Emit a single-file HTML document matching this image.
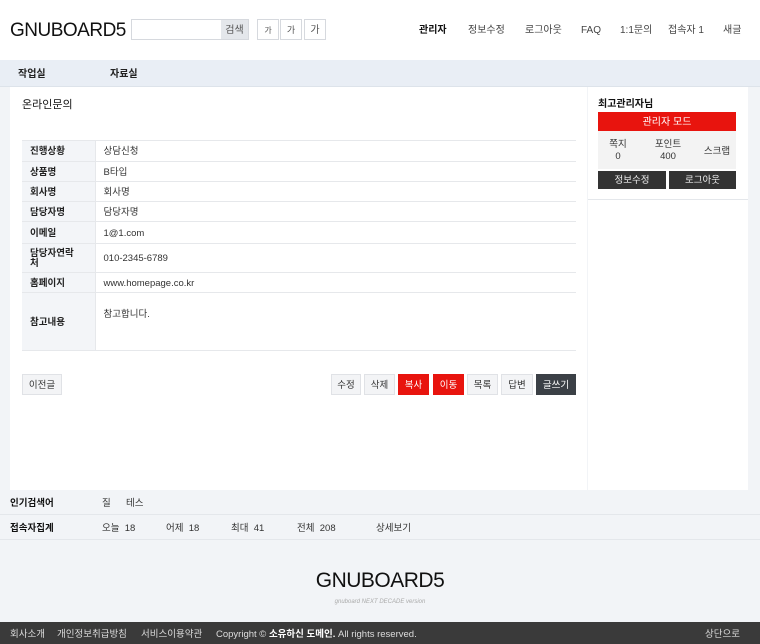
<!DOCTYPE html>
<html><head><meta charset="utf-8"><style>
*{margin:0;padding:0;box-sizing:border-box}
body{width:760px;height:644px;overflow:hidden;background:#f2f4f7;font-family:"Liberation Sans","Noto Sans CJK KR",sans-serif;font-size:10px;color:#333;position:relative;line-height:12px}
.a{position:absolute}
.hd{left:0;top:0;width:760px;height:60px;background:#fff}
.logo{left:10px;top:21px;font-size:19px;line-height:20px;color:#111;letter-spacing:-0.5px}
.sch{left:131px;top:19px;width:118px;height:21px;border:1px solid #d6d9de;background:#fff}
.sch b{position:absolute;right:0;top:0;width:27px;height:19px;background:#e4e7eb;font-weight:normal;font-size:10px;line-height:21px;text-align:center;color:#555}
.fs{top:19px;width:22px;height:21px;border:1px solid #d6d9de;background:#fff;text-align:center;line-height:21px;color:#555}
.tm{top:25px;font-size:10px;line-height:12px;color:#444}
.nav{left:0;top:60px;width:760px;height:27px;background:#e9eef5;border-bottom:1px solid #dde3ea}
.nav span{position:absolute;top:9px;line-height:12px;font-weight:bold;font-size:10px;color:#222}
.ct{left:10px;top:87px;width:577px;height:403px;background:#fff}
.sb{left:588px;top:87px;width:160px;height:403px;background:#fff}
table{position:absolute;left:22px;top:140px;width:554px;border-collapse:collapse;border-top:1px solid #e6e8eb}
td{border-bottom:1px solid #e6e8eb;padding-left:8px;padding-top:2px;font-size:9.5px;color:#333;line-height:12px}
td.l{width:73px;background:#f3f5f8;font-weight:bold;color:#222;border-right:1px solid #e6e8eb}
.bt{top:374px;height:21px;line-height:21px;text-align:center;font-size:9.5px;background:#f3f4f6;border:1px solid #e0e2e6;color:#333}
.r{background:#e8140e;color:#fff;border-color:#e8140e}
.k{background:#3b4046;color:#fff;border-color:#3b4046}
.row{left:0;width:760px;height:25px;border-bottom:1px solid #e4e7eb;background:#f2f4f7}
.row span{position:absolute;top:8px;line-height:12px;font-size:9.5px}
.ft{left:0;top:622px;width:760px;height:22px;background:#3a3a3a;color:#ddd}
.ft span{position:absolute;top:7px;line-height:12px;font-size:9.5px}
</style></head><body>
<div class="a hd"></div>
<div class="a logo">GNUBOARD5</div>
<div class="a sch"><b>검색</b></div>
<div class="a fs" style="left:257px;font-size:8px">가</div>
<div class="a fs" style="left:280px;font-size:9px">가</div>
<div class="a fs" style="left:304px;font-size:10px">가</div>
<div class="a tm" style="left:419px;font-weight:bold;color:#111">관리자</div>
<div class="a tm" style="left:468px">정보수정</div>
<div class="a tm" style="left:525px">로그아웃</div>
<div class="a tm" style="left:581px">FAQ</div>
<div class="a tm" style="left:620px">1:1문의</div>
<div class="a tm" style="left:668px">접속자 1</div>
<div class="a tm" style="left:723px">새글</div>
<div class="a nav"><span style="left:18px">작업실</span><span style="left:110px">자료실</span></div>
<div class="a ct"></div>
<div class="a sb"><div style="position:absolute;left:0;top:112px;width:160px;border-top:1px solid #e4e7eb"></div></div>
<div class="a" style="left:22px;top:98px;font-size:11px;line-height:14px;color:#111">온라인문의</div>
<table>
<tr style="height:21px"><td class="l">진행상황</td><td>상담신청</td></tr>
<tr style="height:20px"><td class="l">상품명</td><td>B타입</td></tr>
<tr style="height:20px"><td class="l">회사명</td><td>회사명</td></tr>
<tr style="height:20px"><td class="l">담당자명</td><td>담당자명</td></tr>
<tr style="height:22px"><td class="l">이메일</td><td>1@1.com</td></tr>
<tr style="height:29px"><td class="l" style="line-height:10px">담당자연락<br>처</td><td>010-2345-6789</td></tr>
<tr style="height:20px"><td class="l">홈페이지</td><td>www.homepage.co.kr</td></tr>
<tr style="height:58px"><td class="l">참고내용</td><td style="vertical-align:top;padding-top:16px">참고합니다.</td></tr>
</table>
<div class="a bt" style="left:22px;width:40px">이전글</div>
<div class="a bt" style="left:331px;width:30px">수정</div>
<div class="a bt" style="left:364px;width:31px">삭제</div>
<div class="a bt r" style="left:398px;width:31px">복사</div>
<div class="a bt r" style="left:433px;width:31px">이동</div>
<div class="a bt" style="left:467px;width:31px">목록</div>
<div class="a bt" style="left:501px;width:32px">답변</div>
<div class="a bt k" style="left:536px;width:40px">글쓰기</div>
<div class="a" style="left:598px;top:99px;font-weight:bold;font-size:10px;color:#111">최고관리자님</div>
<div class="a" style="left:598px;top:112px;width:138px;height:19px;background:#e8140e;color:#fff;text-align:center;line-height:21px;font-size:10px">관리자 모드</div>
<div class="a" style="left:598px;top:131px;width:138px;height:38px;background:#f3f3f3"></div>
<div class="a" style="left:598px;top:139px;width:40px;text-align:center;font-size:9.5px;line-height:12px">쪽지<br>0</div>
<div class="a" style="left:638px;top:139px;width:60px;text-align:center;font-size:9.5px;line-height:12px">포인트<br>400</div>
<div class="a" style="left:698px;top:146px;width:38px;text-align:center;font-size:9.5px">스크랩</div>
<div class="a" style="left:598px;top:171px;width:68px;height:18px;background:#333;color:#eee;text-align:center;line-height:20px;font-size:9.5px">정보수정</div>
<div class="a" style="left:669px;top:171px;width:67px;height:18px;background:#333;color:#eee;text-align:center;line-height:20px;font-size:9.5px">로그아웃</div>
<div class="a row" style="top:490px"><span style="left:10px;font-weight:bold;color:#111">인기검색어</span><span style="left:102px">질</span><span style="left:126px">테스</span></div>
<div class="a row" style="top:515px"><span style="left:10px;font-weight:bold;color:#111">접속자집계</span><span style="left:102px">오늘 &nbsp;18</span><span style="left:166px">어제 &nbsp;18</span><span style="left:231px">최대 &nbsp;41</span><span style="left:297px">전체 &nbsp;208</span><span style="left:376px">상세보기</span></div>
<div class="a" style="left:0;top:569px;width:760px;text-align:center;font-size:21px;line-height:24px;color:#111;letter-spacing:-0.5px">GNUBOARD5</div>
<div class="a" style="left:0;top:598px;width:760px;text-align:center;font-size:6px;line-height:8px;font-style:italic;color:#aaa">gnuboard NEXT DECADE version</div>
<div class="a ft"><span style="left:10px">회사소개</span><span style="left:57px">개인정보취급방침</span><span style="left:141px">서비스이용약관</span><span style="left:216px">Copyright © <b style="color:#fff">소유하신 도메인.</b> All rights reserved.</span><span style="left:705px">상단으로</span></div>
</body></html>
